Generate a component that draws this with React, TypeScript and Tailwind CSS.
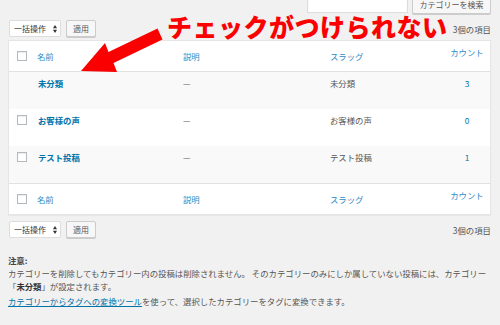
import React from 'react';

const jp = { fontFamily: '"Noto Sans CJK JP", "Noto Sans", sans-serif' };

const rows = [
  { name: '未分類', slug: '未分類', count: '3', check: false, striped: true },
  { name: 'お客様の声', slug: 'お客様の声', count: '0', check: true, striped: false },
  { name: 'テスト投稿', slug: 'テスト投稿', count: '1', check: true, striped: true },
];

function Checkbox() {
  return <div className="w-[10px] h-[10px] border border-[#b4b9be] bg-white shadow-[inset_0_1px_1px_rgba(0,0,0,0.08)]" />;
}

function BulkActions() {
  return (
    <div className="flex items-center gap-[5px]">
      <div className="w-[52px] h-[17px] bg-white border border-[#ddd] rounded-[2px] flex items-center pl-[4px] pr-[3px] justify-between text-[#333] text-[8px]">
        <span className="whitespace-nowrap">一括操作</span>
        <svg width="4" height="8" viewBox="0 0 4 8">
          <polygon points="0,3.3 2,0 4,3.3" fill="#333" />
          <polygon points="0,4.7 2,8 4,4.7" fill="#333" />
        </svg>
      </div>
      <button className="w-[30px] h-[17px] bg-[#f7f7f7] border border-[#ccc] rounded-[2px] shadow-[0_1px_0_#ccc] text-[#555] text-[8px]">
        適用
      </button>
    </div>
  );
}

function HeaderRow({ top }: { top: boolean }) {
  return (
    <div
      className={`grid grid-cols-[28px_146px_147px_120px_1fr] items-center h-[31px] ${
        top ? 'border-b' : 'border-t'
      } border-[#e1e1e1] text-[#2e8bc7]`}
    >
      <div className="pl-[8px]">
        <Checkbox />
      </div>
      <div>名前</div>
      <div>説明</div>
      <div>スラッグ</div>
      <div className="pb-[8px] pr-[6px] text-center">カウント</div>
    </div>
  );
}

export default function App() {
  return (
    <div className="relative w-[500px] h-[325px] overflow-hidden bg-[#f1f1f1] text-[8.4px] leading-[12px] text-[#555]" style={jp}>
      <div className="pl-[8px] pr-[9px]">
        {/* search */}
        <div className="flex justify-end gap-[4px] -mt-[4px] h-[18px]">
          <div className="w-[101px] h-[17px] bg-white border border-[#ddd] shadow-[inset_0_1px_2px_rgba(0,0,0,0.07)]" />
          <button className="w-[79px] h-[18px] bg-[#f7f7f7] border border-[#ccc] rounded-[2px] shadow-[0_1px_0_#ccc] text-[#555] text-[8px] whitespace-nowrap flex items-end justify-center pb-[2px]">
            カテゴリーを検索
          </button>
        </div>

        {/* top nav */}
        <div className="flex items-center justify-between mt-[6px] pl-[1px]">
          <BulkActions />
          <span className="text-[#555]">3個の項目</span>
        </div>

        {/* table */}
        <div className="mt-[3px] bg-white border border-[#e5e5e5] shadow-[0_1px_1px_rgba(0,0,0,0.04)]">
          <HeaderRow top />
          {rows.map((r) => (
            <div
              key={r.name}
              className={`grid grid-cols-[28px_146px_147px_120px_1fr] items-start h-[37px] pt-[5px] ${
                r.striped ? 'bg-[#f9f9f9]' : 'bg-white'
              }`}
            >
              <div className="pl-[8px] pt-[1px]">{r.check && <Checkbox />}</div>
              <div className="font-bold text-[#0073aa] pl-[1px]">{r.name}</div>
              <div className="text-[#666]">—</div>
              <div>{r.slug}</div>
              <div className="pr-[6px] text-center text-[#0073aa]">{r.count}</div>
            </div>
          ))}
          <HeaderRow top={false} />
        </div>

        {/* bottom nav */}
        <div className="flex items-center justify-between mt-[6px] pl-[1px]">
          <BulkActions />
          <span className="text-[#555]">3個の項目</span>
        </div>

        {/* note */}
        <div className="mt-[16px] leading-[13px]">
          <p className="font-bold text-[#444]">注意:</p>
          <p>
            カテゴリーを削除してもカテゴリー内の投稿は削除されません。 そのカテゴリーのみにしか属していない投稿には、カテゴリー
            <br />
            「<strong className="text-[#333]">未分類</strong>」が設定されます。
          </p>
          <p className="mt-[2px]">
            <a className="text-[#0073aa] underline">カテゴリーからタグへの変換ツール</a>を使って、選択したカテゴリーをタグに変換できます。
          </p>
        </div>
      </div>

      {/* annotation */}
      <svg className="absolute left-0 top-0" width="500" height="325" viewBox="0 0 500 325">
        <polygon
          points="81,71 105,43 108.5,52 157.5,28.5 162.5,39.5 113.5,63 117,72"
          fill="#fb0000"
        />
      </svg>
      <div className="absolute left-[167px] top-[14px] text-[25px] leading-none font-black tracking-[0.5px] text-[#fb0000] whitespace-nowrap">
        チェックがつけられない
      </div>
    </div>
  );
}
